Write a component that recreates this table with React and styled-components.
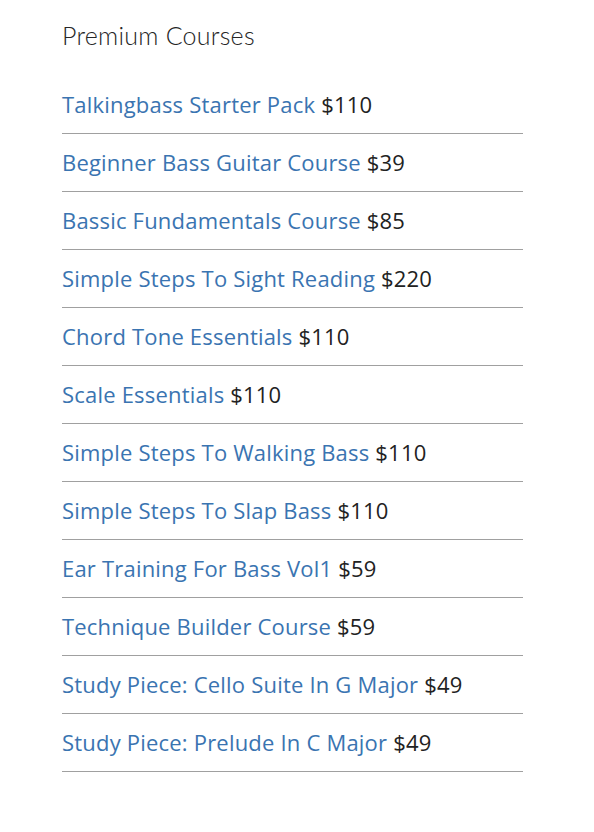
import styled, { createGlobalStyle } from 'styled-components';

const GlobalStyle = createGlobalStyle`
    body {
        margin: 0;
        background: #fff;
    }
`;

const Container = styled.div`
    width: 461px;
    padding: 18px 0 40px 62px;
`;

const Titulo = styled.h2`
    margin: 0 0 24px 0;
    font-family: Lato, "Open Sans", sans-serif;
    font-weight: 300;
    font-size: 25px;
    letter-spacing: 0.25px;
    line-height: 34px;
    color: #262626;
`;

const Lista = styled.ul`
    list-style: none;
    margin: 0;
    padding: 0;
`;

const Item = styled.li`
    padding: 14px 0 15px 0;
    border-bottom: 1px solid #a0a0a0;
    font-family: "Open Sans", sans-serif;
    font-size: 22px;
    letter-spacing: 0.2px;
    line-height: 28px;
    color: #222;
`;

const Link = styled.a`
    color: #3a74b1;
    text-decoration: none;
`;

const cursos = [
    ['Talkingbass Starter Pack', '$110'],
    ['Beginner Bass Guitar Course', '$39'],
    ['Bassic Fundamentals Course', '$85'],
    ['Simple Steps To Sight Reading', '$220'],
    ['Chord Tone Essentials', '$110'],
    ['Scale Essentials', '$110'],
    ['Simple Steps To Walking Bass', '$110'],
    ['Simple Steps To Slap Bass', '$110'],
    ['Ear Training For Bass Vol1', '$59'],
    ['Technique Builder Course', '$59'],
    ['Study Piece: Cello Suite In G Major', '$49'],
    ['Study Piece: Prelude In C Major', '$49'],
];

function App() {
    return (
        <>
            <GlobalStyle />
            <Container>
                <Titulo>Premium Courses</Titulo>
                <Lista>
                    {cursos.map(([nome, preco]) => (
                        <Item key={nome}>
                            <Link href="#">{nome}</Link> {preco}
                        </Item>
                    ))}
                </Lista>
            </Container>
        </>
    );
}

export default App;
